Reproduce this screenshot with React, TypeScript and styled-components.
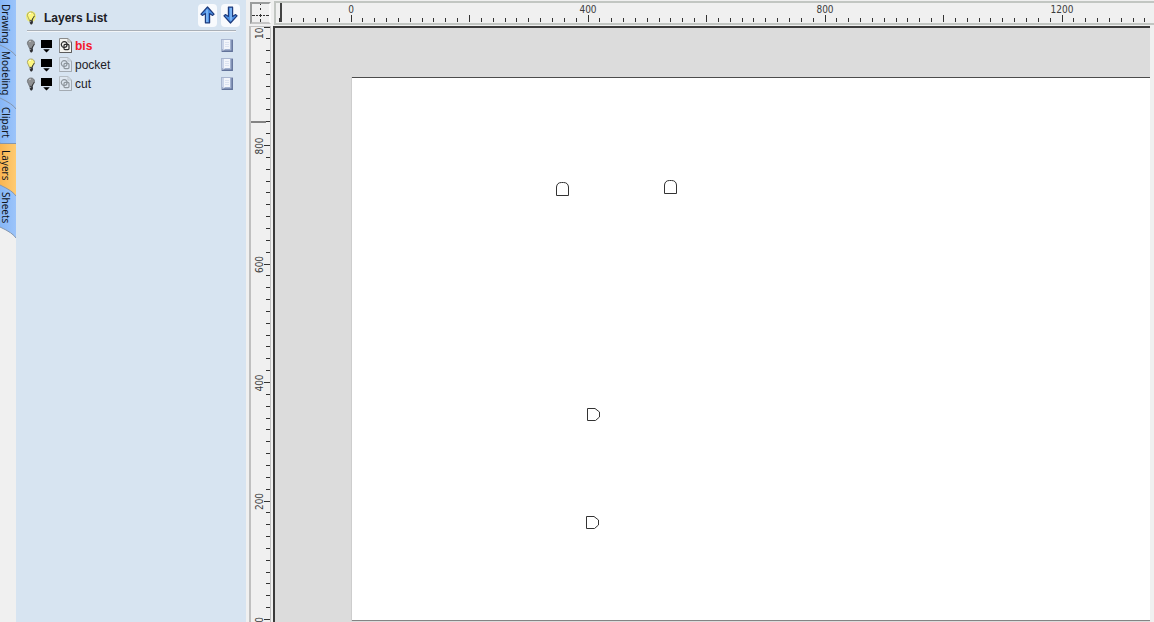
import React, { useEffect, useState } from "react";
import styled, { createGlobalStyle } from "styled-components";

const GlobalStyle = createGlobalStyle`
  * { box-sizing: border-box; }
  body {
    margin: 0;
    overflow: hidden;
    background: #f0f0f0;
    color: #1c2026;
    font-family: "Liberation Sans", Arial, sans-serif;
    font-size: 12px;
  }
  button { font: inherit; color: inherit; border: 0; padding: 0; background: none; }
  h1, ul { margin: 0; padding: 0; }
  svg { display: block; }
`;

const Page = styled.div`
  display: flex;
  height: 100vh;
`;

/* ---------- side tabs ---------- */

const TabStrip = styled.nav`
  display: flex;
  flex-direction: column;
  flex: none;
  width: 16px;
  background: #f0f0f0;
`;

const Tab = styled.button<{ $length: number; $level: number }>`
  position: relative;
  z-index: ${(p) => p.$level};
  display: flex;
  align-items: center;
  flex: none;
  width: 16px;
  height: ${(p) => p.$length}px;
  padding-top: 3px;
`;

const TabShape = styled.svg`
  position: absolute;
  top: 0;
  left: 0;
`;

const TabLabel = styled.span`
  position: relative;
  writing-mode: vertical-rl;
  line-height: 12px;
  font-family: "Noto Sans", sans-serif;
  font-size: 10px;
  color: #10151c;
`;

/* ---------- layers panel ---------- */

const Panel = styled.aside`
  flex: none;
  width: 230px;
  padding: 2px 6px 0 8px;
  background: #d7e4f1;
`;

const PanelHeader = styled.header`
  display: flex;
  align-items: center;
  gap: 4px;
  height: 28px;
  padding-left: 2px;
`;

const Title = styled.h1`
  flex: 1;
  padding: 4px 0 0 4px;
  font-size: 12px;
  line-height: 16px;
  font-weight: bold;
`;

const HeaderBulb = styled.span`
  padding-top: 3px;
`;

const ArrowButton = styled.button`
  display: grid;
  place-items: center;
  width: 19px;
  height: 23px;
  margin-bottom: 2px;
  border-radius: 4px;
  background: #f8fafd;
`;

const Divider = styled.hr`
  height: 2px;
  margin: 0 4px 4px 3px;
  border: 0;
  border-top: 1px solid #aab0b8;
  border-bottom: 1px solid #f2f5f8;
`;

const LayerList = styled.ul`
  list-style: none;
`;

const LayerRow = styled.li`
  display: flex;
  align-items: center;
  height: 19px;
  padding: 0 5px 0 2px;
`;

const IconButton = styled.button<{ $width: number }>`
  flex: none;
  width: ${(p) => p.$width}px;
`;

const LayerName = styled.button<{ $active: boolean }>`
  flex: 1;
  text-align: left;
  line-height: 16px;
  font-weight: ${(p) => (p.$active ? "bold" : "normal")};
  color: ${(p) => (p.$active ? "#f4182a" : "#1c2026")};
`;

/* ---------- drawing area ---------- */

const Workspace = styled.main`
  flex: 1;
  min-width: 0;
  display: grid;
  grid-template-columns: 24px 1fr;
  grid-template-rows: 26px 1fr;
  padding-left: 3px;
  background: #f0f0f0;
`;

const Corner = styled.div`
  margin: 2px 2px 2px 1px;
  border: 2px solid #fafafa;
  border-top-color: #9a9c9c;
  border-left-color: #9a9c9c;
  border-bottom-color: #c4c4c4;
`;

const TopRuler = styled.div`
  min-width: 0;
  margin: 1px 0 1px 1px;
  border: solid #c2c6c2;
  border-width: 2px 0 2px 2px;
  overflow: hidden;
`;

const SideRuler = styled.div`
  min-height: 0;
  border: solid #c0c0c0;
  border-width: 1px 1px 0 2px;
  margin-right: 2px;
  overflow: hidden;
`;

const Scale = styled.svg`
  width: 100%;
  height: 100%;
  font-family: "DejaVu Sans Condensed", "DejaVu Sans", sans-serif;
  font-size: 10px;
  fill: #3c3c3c;
`;

const Canvas = styled.div`
  display: flex;
  min-width: 0;
  margin-right: 4px;
  padding: 49px 0 1px 77px;
  border: solid #3a3a3a;
  border-width: 2px 0 0 2px;
  background: #dcdcdc;
`;

const Material = styled.div`
  position: relative;
  flex: 1;
  border: solid #4c4c4c;
  border-width: 1px 0 1px 0;
  border-bottom-color: #848484;
  background: #fff;
  box-shadow: -1px 0 #cdcdcd;
`;

const Part = styled.svg<{ $x: number; $y: number }>`
  position: absolute;
  left: ${(p) => p.$x}px;
  top: ${(p) => p.$y}px;
  fill: none;
  stroke: #333;
`;

/* ---------- icons ---------- */

function Bulb({ lit, glow }: { lit: boolean; glow?: boolean }) {
  return (
    <svg width="10" height="14" viewBox="0 0 10 14" aria-hidden="true">
      {glow && <ellipse cx="5" cy="5.5" rx="5" ry="5.5" fill="#eef080" />}
      <path
        d="M5 1C2.6 1 1.2 2.6 1.4 4.6C1.6 6.4 3.2 7.2 3.4 9.2H6.4C6.6 7.4 8.5 6.4 8.5 4.4C8.5 2.4 7 1 5 1Z"
        fill={lit ? "#fdf780" : "#8e9092"}
        stroke={lit ? "#9c9550" : "#66686c"}
        strokeWidth="0.8"
      />
      <path d="M3.2 2.8Q4 2 5 2.2" stroke={lit ? "#fff" : "#d4d4d4"} fill="none" />
      <path d="M8.2 5.2Q7.6 6.4 6.8 7.2L6.2 9" stroke="#303030" strokeWidth="1" fill="none" />
      <path d="M3.6 9.3H6.9V12L5.8 13.4H4.8L3.8 12Z" fill="#2b2c30" />
      <path d="M3.6 10.6H5.2" stroke="#c8c8c8" strokeWidth="0.7" />
    </svg>
  );
}

function ColorSwatch() {
  return (
    <svg width="11" height="14" viewBox="0 0 11 14" aria-hidden="true">
      <path d="M0 1H11V9H0Z M2.2 10.2H8.8L5.5 13.6Z" fill="#000" />
    </svg>
  );
}

function VectorsIcon({ active }: { active: boolean }) {
  return (
    <svg width="13" height="15" viewBox="0 0 13 15" opacity={active ? 1 : 0.42} aria-hidden="true">
      <path d="M0.5 0.5H9L12.5 4V14.5H0.5Z" fill={active ? "#f4f4f0" : "#e8ecf2"} stroke="#8a8a8a" />
      <path d="M12.5 4V14.5H0.5" fill="none" stroke="#5c5c5c" />
      <path d="M9 0.5V4H12.5" fill="none" stroke="#999" />
      <circle cx="5.2" cy="6.6" r="2.9" fill="none" stroke="#2c2c2c" strokeWidth="1.2" />
      <rect x="5" y="6.4" width="5" height="5.2" rx="1" fill="none" stroke="#2c2c2c" strokeWidth="1.2" />
    </svg>
  );
}

function SheetIcon() {
  return (
    <svg width="12" height="13" viewBox="0 0 12 13" aria-hidden="true">
      <rect x="0.5" y="0.5" width="11" height="12" fill="#a3b2d0" stroke="#a9b6d0" />
      <rect x="1" y="1" width="2" height="9" fill="#c9d4e8" />
      <rect x="3" y="1" width="6" height="9" fill="#f2f5fb" />
      <path d="M4 3.5H8M4 5.5H8M4 7.5H8" stroke="#dbe2f0" />
      <path d="M11.2 1V12.3H1" fill="none" stroke="#62739a" strokeWidth="1.4" />
      <path d="M2 11.5L4 9.5" stroke="#f2f5fb" />
    </svg>
  );
}

function ArrowIcon({ down }: { down?: boolean }) {
  return (
    <svg width="15" height="18" viewBox="0 0 15 18" aria-hidden="true">
      <g transform={down ? "rotate(180 7.5 9)" : undefined}>
        <path
          d="M7.5 1L14 8.2L12.6 9.4L9.6 7.6V16.8H5.4V7.6L2.4 9.4L1 8.2Z"
          fill="#4c90e4"
          stroke="#1d3a7c"
          strokeWidth="1.2"
          strokeLinejoin="round"
        />
        <path d="M7 3.5V16" stroke="#8cc0f8" strokeWidth="1.4" />
      </g>
    </svg>
  );
}

function CrosshairIcon() {
  return (
    <svg width="17" height="18" viewBox="0 0 17 18" stroke="#333" aria-hidden="true">
      <path d="M8.5 0V1M8.5 4V6M8.5 15V18M0 11.5H3M4 11.5H6M11 11.5H13M14 11.5H17" />
      <path d="M7 11.5H10M8.5 10V13" />
    </svg>
  );
}

/* ---------- rulers ---------- */

const UNIT = 0.5925;
const MINOR_STEP = 20;
const range = (from: number, to: number, step: number) =>
  Array.from({ length: Math.max(0, Math.floor((to - from) / step) + 1) }, (_, i) => from + i * step);

function useWindowSize() {
  const [size, setSize] = useState({ width: window.innerWidth, height: window.innerHeight });
  useEffect(() => {
    const update = () => setSize({ width: window.innerWidth, height: window.innerHeight });
    window.addEventListener("resize", update);
    return () => window.removeEventListener("resize", update);
  }, []);
  return size;
}

function HorizontalScale() {
  const { width } = useWindowSize();
  const origin = 75;
  const last = (width - 351) / UNIT;
  const at = (v: number) => Math.round(origin + v * UNIT - 0.5) + 0.5;
  return (
    <Scale role="img" aria-label="Horizontal ruler">
      <g stroke="#333">
        {range(-120, last, MINOR_STEP).map((v) => (
          <line key={v} x1={at(v)} x2={at(v)} y1={v % 200 === 0 ? 12 : 15} y2={19} />
        ))}
        <line x1={5} x2={5} y1={0} y2={19} strokeWidth={2} stroke="#444" />
      </g>
      {range(0, last - 20, 400).map((v) => (
        <text key={v} x={origin + v * UNIT} y={10} textAnchor="middle">
          {v}
        </text>
      ))}
    </Scale>
  );
}

function VerticalScale() {
  const { height } = useWindowSize();
  const origin = 592;
  const first = -Math.floor(Math.max(0, height - 622) / UNIT / 200) * 200;
  const at = (v: number) => Math.round(origin - v * UNIT) + 0.5;
  return (
    <Scale role="img" aria-label="Vertical ruler">
      <g stroke="#333">
        {range(first, 1000, MINOR_STEP).map((v) => (
          <line key={v} y1={at(v)} y2={at(v)} x1={v % 200 === 0 ? 13 : 15} x2={19} />
        ))}
        <line x1={0} x2={15} y1={95} y2={95} strokeWidth={1.4} stroke="#555" />
      </g>
      {range(first, 1000, 200).map((v) => (
        <text key={v} transform={`translate(12 ${origin - v * UNIT + 1}) rotate(-90)`} textAnchor="middle">
          {v}
        </text>
      ))}
    </Scale>
  );
}

/* ---------- data ---------- */

const tabs = [
  { name: "Drawing", length: 45 },
  { name: "Modeling", length: 53 },
  { name: "Clipart", length: 45 },
  { name: "Layers", length: 42 },
  { name: "Sheets", length: 42 },
];

const initialLayers = [
  { name: "bis", visible: false },
  { name: "pocket", visible: true },
  { name: "cut", visible: false },
];

const parts = [
  { x: 203, y: 103, sideways: false },
  { x: 311, y: 101, sideways: false },
  { x: 234, y: 329, sideways: true },
  { x: 233, y: 437, sideways: true },
];

export default function App() {
  const [tab, setTab] = useState("Layers");
  const [active, setActive] = useState("bis");
  const [layers, setLayers] = useState(initialLayers);

  const toggle = (name: string) =>
    setLayers(layers.map((l) => (l.name === name ? { ...l, visible: !l.visible } : l)));

  return (
    <Page>
      <GlobalStyle />
      <TabStrip aria-label="Panels">
        {tabs.map(({ name, length }, i) => {
          const on = name === tab;
          return (
            <Tab
              key={name}
              $length={length}
              $level={on ? 10 : tabs.length - i}
              aria-pressed={on}
              onClick={() => setTab(name)}
            >
              <TabShape width="16" height={length + 13} aria-hidden="true">
                <defs>
                  <linearGradient id={`tab-${name}`}>
                    <stop offset="0" stopColor={on ? "#f9b552" : "#86b6f6"} />
                    <stop offset="1" stopColor={on ? "#ffcb72" : "#9cc4fa"} />
                  </linearGradient>
                </defs>
                <path d={`M0 0H16V${length + 11}Q13 ${length + 6} 0 ${length}Z`} fill={`url(#tab-${name})`} />
                <path
                  d={`M0 ${length}Q13 ${length + 6} 16 ${length + 11}${on ? "M0 0.5H16" : ""}`}
                  fill="none"
                  stroke="#8496ae"
                />
              </TabShape>
              <TabLabel>{name}</TabLabel>
            </Tab>
          );
        })}
      </TabStrip>

      <Panel>
        <PanelHeader>
          <HeaderBulb>
            <Bulb lit glow />
          </HeaderBulb>
          <Title>Layers List</Title>
          <ArrowButton aria-label="Move layer up">
            <ArrowIcon />
          </ArrowButton>
          <ArrowButton aria-label="Move layer down">
            <ArrowIcon down />
          </ArrowButton>
        </PanelHeader>
        <Divider />
        <LayerList>
          {layers.map(({ name, visible }) => (
            <LayerRow key={name}>
              <IconButton $width={15} aria-label={`Toggle ${name}`} onClick={() => toggle(name)}>
                <Bulb lit={visible} />
              </IconButton>
              <IconButton $width={18} aria-label={`Colour of ${name}`}>
                <ColorSwatch />
              </IconButton>
              <IconButton $width={16} aria-label={`Vectors on ${name}`}>
                <VectorsIcon active={name === active} />
              </IconButton>
              <LayerName $active={name === active} onClick={() => setActive(name)}>
                {name}
              </LayerName>
              <IconButton $width={14} aria-label={`Menu for ${name}`}>
                <SheetIcon />
              </IconButton>
            </LayerRow>
          ))}
        </LayerList>
      </Panel>

      <Workspace>
        <Corner>
          <CrosshairIcon />
        </Corner>
        <TopRuler>
          <HorizontalScale />
        </TopRuler>
        <SideRuler>
          <VerticalScale />
        </SideRuler>
        <Canvas>
          <Material>
            {parts.map((p) => (
              <Part key={`${p.x}-${p.y}`} $x={p.x} $y={p.y} width="15" height="15" viewBox="0 0 15 15">
                <path
                  d={
                    p.sideways
                      ? "M1.5 1.5H9L13.5 5V10L9.5 13.5H1.5Z"
                      : "M1.5 14.5V6Q2 1.5 6.5 1.5H8.5Q13 1.5 13.5 6V14.5Z"
                  }
                />
              </Part>
            ))}
          </Material>
        </Canvas>
      </Workspace>
    </Page>
  );
}
